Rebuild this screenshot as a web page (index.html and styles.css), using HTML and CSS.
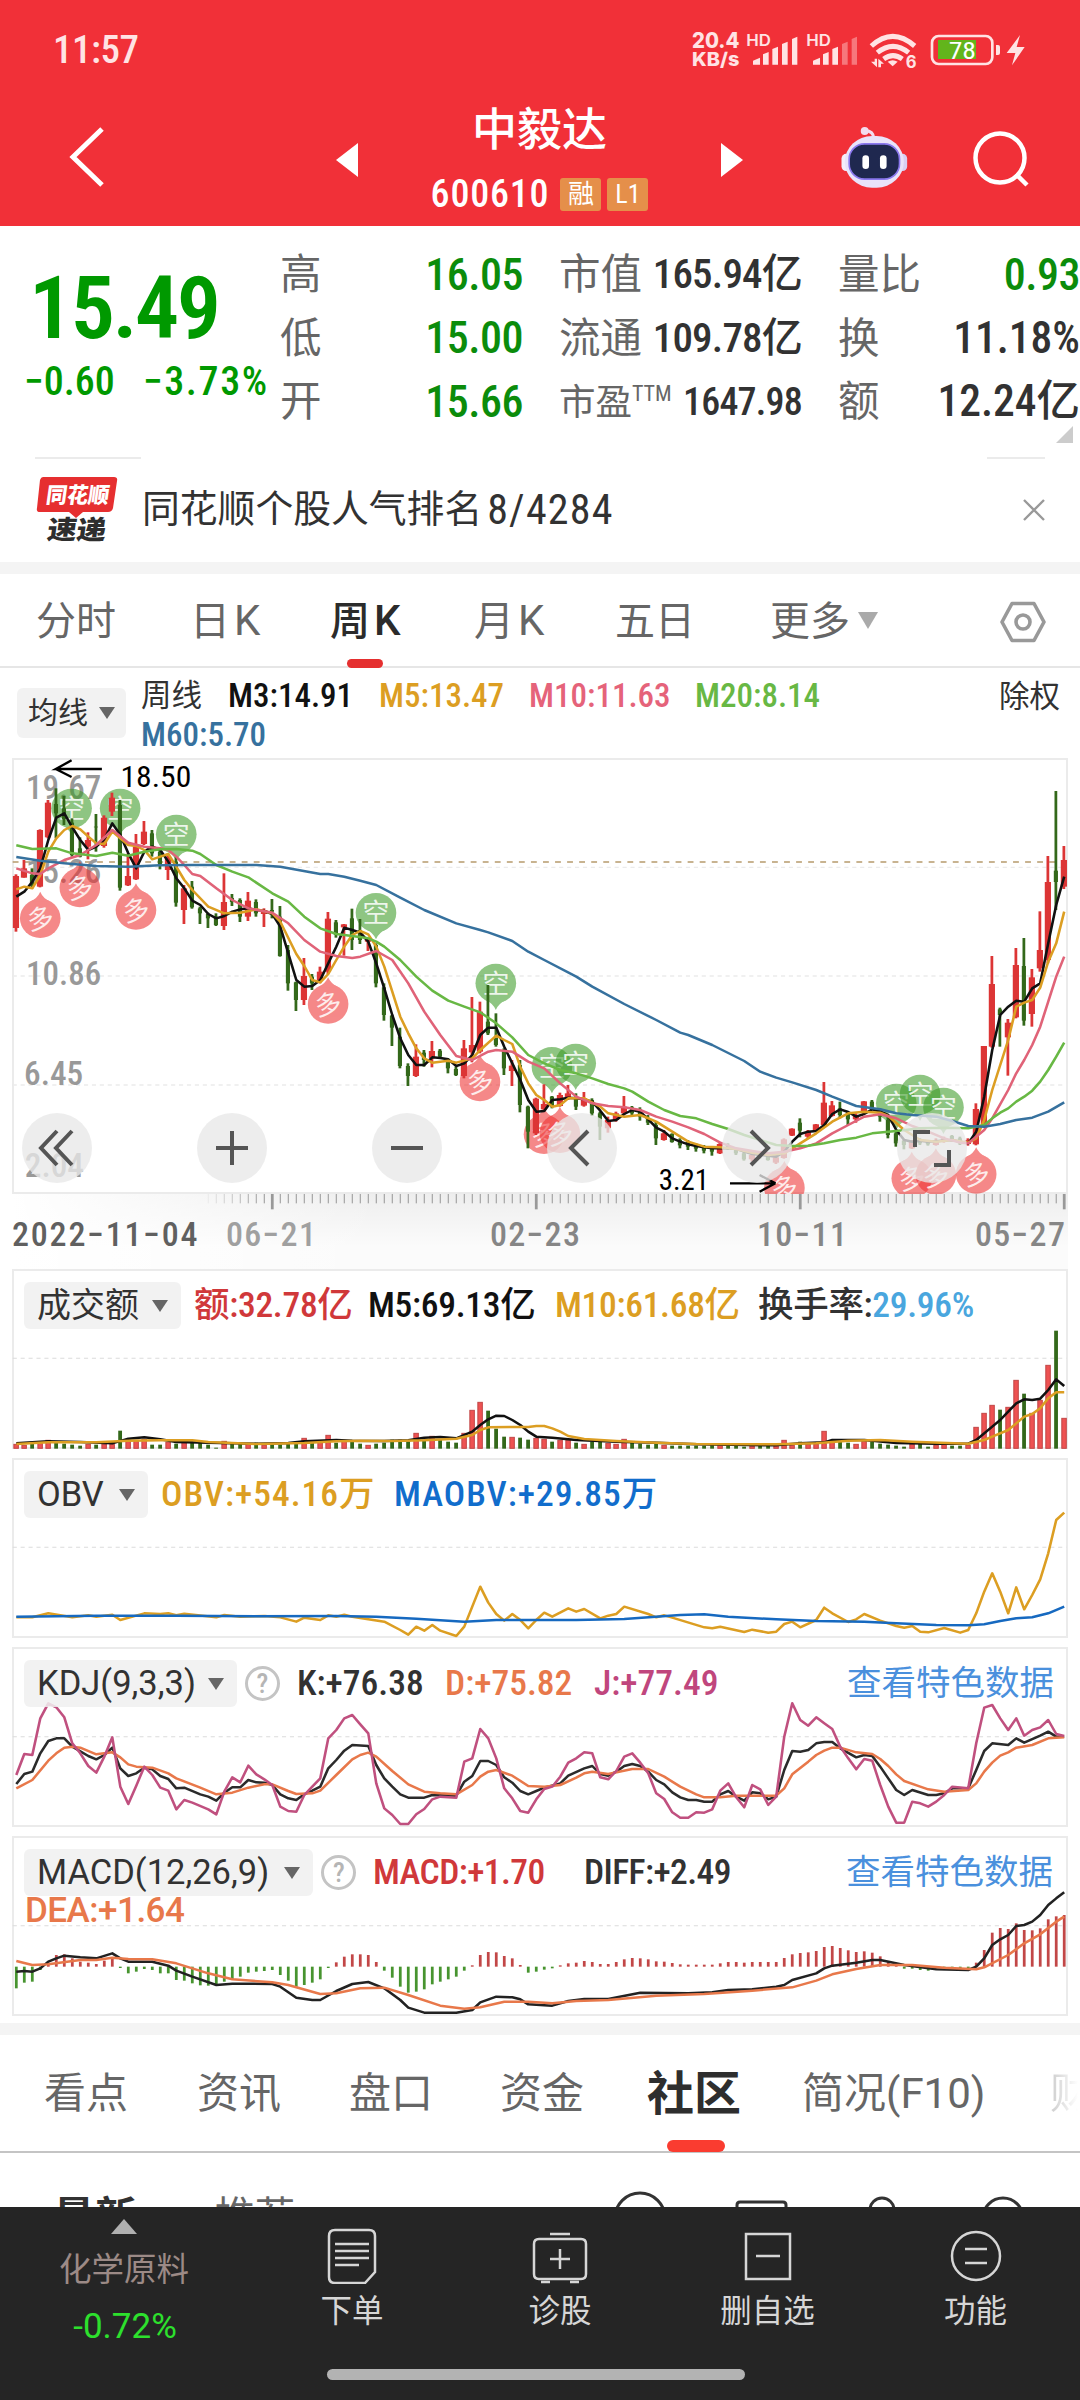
FILE: index.html
```
<!DOCTYPE html>
<html lang="zh-CN">
<head>
    <meta charset="UTF-8">
    <meta name="viewport" content="width=device-width, initial-scale=1.0">
    <title>中毅达 600610</title>
    <link rel="stylesheet" href="styles.css">
</head>
<body>
    <header class="header">
        <div class="status-bar">
            <span class="clock">11:57</span>
            <svg class="status-icons" viewBox="0 0 1080 180" width="360" height="60">
                <g fill="#ffe3e4" font-family="Inter, sans-serif">
                    <text x="36" y="83" font-size="64" font-weight="800" textLength="142" lengthAdjust="spacingAndGlyphs">20.4</text>
                    <text x="36" y="138" font-size="56" font-weight="800" textLength="142" lengthAdjust="spacingAndGlyphs">KB/s</text>
                    <text x="199" y="77" font-size="47" font-weight="600" textLength="74" lengthAdjust="spacingAndGlyphs">HD</text>
                    <text x="379" y="77" font-size="47" font-weight="600" textLength="74" lengthAdjust="spacingAndGlyphs">HD</text>
                    <path d="M219 134v-12l21-9v21zM249 134v-31l17-7v38zM277 134v-47l17-7v54zM306 134v-62l17-7v69zM336 134v-77l16-7v84z"/>
                    <path d="M399 134v-12l21-9v21zM429 134v-31l17-7v38zM457 134v-47l17-7v54z"/>
                    <path d="M486 134v-62l17-7v69zM515 134v-77l16-7v84z" opacity=".4"/>
                    <g fill="none" stroke="#ffe3e4" stroke-width="15">
                        <path d="M574 78q64-58 130 0"/>
                        <path d="M592 98q47-38 94 0"/>
                        <path d="M611 117q28-20 56 0"/>
                    </g>
                    <path d="M623 125q15-9 30 0l-15 14z"/>
                    <path d="M584 116h7v26l-18-17h11zM595 142v-26l17 15h-9v11z"/>
                    <text x="677" y="144" font-size="50" font-weight="700">6</text>
                    <rect x="756" y="48" width="181" height="84" rx="20" fill="none" stroke="#ffe3e4" stroke-width="8"/>
                    <path d="M948 75h6q6 0 6 6v18q0 6-6 6h-6z"/>
                    <rect x="774" y="60" width="114" height="57" fill="#62b51c"/>
                    <text x="806" y="116" font-size="70" font-family="Roboto, sans-serif" fill="#fff" textLength="82" lengthAdjust="spacingAndGlyphs">78</text>
                    <path d="M1020 45l-40 54h26l-10 37 38-55h-24z"/>
                </g>
            </svg>
        </div>
        <div class="title-bar">
            <svg class="back" viewBox="0 0 40 64" width="40" height="64"><path d="M35 4L6 32 35 60" fill="none" stroke="#fff" stroke-width="5"/></svg>
            <svg class="prev" viewBox="0 0 22 34" width="22" height="34"><path d="M22 0v34L0 17z" fill="#fff"/></svg>
            <div class="stock">
                <h1>中毅达</h1>
                <div class="code"><span class="code-num">600610</span><span class="tag">融</span><span class="tag">L1</span></div>
            </div>
            <svg class="next" viewBox="0 0 22 34" width="22" height="34"><path d="M0 0v34L22 17z" fill="#fff"/></svg>
            <svg class="robot" viewBox="0 0 204 190" width="68" height="63">
                <path d="M102 38q-2-24-26-24" fill="none" stroke="#f3dcef" stroke-width="9"/>
                <circle cx="74" cy="15" r="12" fill="#f3dcef"/>
                <rect x="4" y="84" width="30" height="52" rx="14" fill="#f4eefb"/>
                <rect x="172" y="84" width="30" height="52" rx="14" fill="#d9d0f3"/>
                <rect x="14" y="30" width="178" height="156" rx="82" fill="#e9e3fa"/>
                <rect x="27" y="54" width="152" height="106" rx="46" fill="#1f284f" stroke="#8b78ee" stroke-width="5"/>
                <rect x="67" y="88" width="20" height="42" rx="10" fill="#fff"/>
                <rect x="120" y="88" width="20" height="42" rx="10" fill="#fff"/>
            </svg>
            <svg class="search" viewBox="0 0 58 58" width="58" height="58"><g fill="none" stroke="#fff" stroke-width="4.5"><circle cx="27" cy="27" r="24.5"/><path d="M43 43l11 11"/></g></svg>
        </div>
    </header>

    <section class="quote">
        <div class="price">
            <strong>15.49</strong>
            <p><span>−0.60</span><span>−3.73%</span></p>
        </div>
        <dl class="stats">
            <dt>高</dt><dd class="down">16.05</dd>
            <dt>市值</dt><dd class="narrow">165.94亿</dd>
            <dt>量比</dt><dd class="down">0.93</dd>
            <dt>低</dt><dd class="down">15.00</dd>
            <dt>流通</dt><dd class="narrow">109.78亿</dd>
            <dt>换</dt><dd>11.18%</dd>
            <dt>开</dt><dd class="down">15.66</dd>
            <dt class="pe">市盈<sup>TTM</sup></dt><dd class="narrow pe">1647.98</dd>
            <dt>额</dt><dd>12.24亿</dd>
        </dl>
        <i class="corner"></i>
    </section>

    <section class="news">
        <svg class="news-logo" viewBox="0 0 82 68" width="82" height="68">
            <path d="M7 1h71q4 0 3 4l-4 27q-1 4-5 4H47l-7 6-7-6H4q-4 0-3-4L4 4q1-3 3-3z" fill="#e62f30"/>
            <g font-family="Noto Sans CJK SC, sans-serif" font-weight="900">
                <text transform="skewX(-8)" x="13" y="27" font-size="22" fill="#fff" textLength="63" lengthAdjust="spacingAndGlyphs">同花顺</text>
                <text transform="skewX(-8)" x="19" y="63" font-size="26" fill="#2e2e2e" textLength="59" lengthAdjust="spacingAndGlyphs">速递</text>
            </g>
        </svg>
        <p>同花顺个股人气排名<span>8/4284</span></p>
        <svg class="close" viewBox="0 0 22 22" width="22" height="22"><path d="M1 1l20 20M21 1L1 21" stroke="#999" stroke-width="2.4"/></svg>
    </section>

    <nav class="period-tabs">
        <span>分时</span><span>日<em>K</em></span><span class="active">周<em>K</em></span><span>月<em>K</em></span><span>五日</span><span class="more">更多<i class="caret"></i></span>
        <svg viewBox="0 0 46 42" width="46" height="42"><g fill="none" stroke="#999" stroke-width="3.6"><path d="M12 2.500h22L44 21 34 39.500H12L2 21z" stroke-linejoin="round"/><circle cx="23" cy="21" r="7"/></g></svg>
    </nav>

    <div class="ma-row">
        <button class="chip">均线<i class="caret"></i></button>
        <div class="ma-list">
            <span class="ma-name">周线</span><span class="c-black">M3:14.91</span><span class="c-gold">M5:13.47</span><span class="c-pink">M10:11.63</span><span class="c-green">M20:8.14</span><span class="c-steel">M60:5.70</span>
        </div>
        <span class="adjust">除权</span>
    </div>

    <div class="panel panel-main">
        <svg id="klineChart" viewBox="35 24 3066.6 1308" preserveAspectRatio="none"></svg>
        <div class="controls">
            <button><svg viewBox="0 0 40 40"><path d="M20 3L4 20l16 17M35 3L19 20l16 17"/></svg></button>
            <button><svg viewBox="0 0 40 40"><path d="M20 3v34M4 20h32"/></svg></button>
            <button><svg viewBox="0 0 40 40"><path d="M4 20h32"/></svg></button>
            <button><svg viewBox="0 0 40 40"><path d="M26 3L9 20l17 17"/></svg></button>
            <button><svg viewBox="0 0 40 40"><path d="M14 3l17 17-17 17"/></svg></button>
            <button><svg viewBox="0 0 40 40"><path d="M3 19V4h15M37 22v15H22"/></svg></button>
        </div>
    </div>
    <div class="time-axis">
        <svg id="timeTicks" viewBox="35 0 3066.6 48" preserveAspectRatio="none"></svg>
        <div class="dates"><b>2022−11−04</b><span class="faded">06−21</span><span>02−23</span><span>10−11</span><span>05−27</span></div>
    </div>

    <div class="panel">
        <svg id="volumeChart" viewBox="35 27 3066.6 540" preserveAspectRatio="none"></svg>
        <div class="legend legend-vol">
            <button class="chip">成交额<i class="caret"></i></button>
            <span class="c-red">额:32.78亿</span><span class="c-black">M5:69.13亿</span><span class="c-gold">M10:61.68亿</span><span>换手率:<em class="c-sky">29.96%</em></span>
        </div>
    </div>

    <div class="panel">
        <svg id="obvChart" viewBox="35 594 3066.6 540" preserveAspectRatio="none"></svg>
        <div class="legend legend-obv">
            <button class="chip">OBV<i class="caret"></i></button>
            <span class="c-gold">OBV:+54.16万</span><span class="c-blue">MAOBV:+29.85万</span>
        </div>
    </div>

    <div class="panel">
        <svg id="kdjChart" viewBox="35 21 3066.6 540" preserveAspectRatio="none"></svg>
        <div class="legend legend-kdj">
            <button class="chip">KDJ(9,3,3)<i class="caret"></i></button><i class="help">?</i>
            <span>K:+76.38</span><span class="c-orange">D:+75.82</span><span class="c-magenta">J:+77.49</span><a>查看特色数据</a>
        </div>
    </div>

    <div class="panel">
        <svg id="macdChart" viewBox="35 588 3066.6 540" preserveAspectRatio="none"></svg>
        <div class="legend legend-macd">
            <button class="chip">MACD(12,26,9)<i class="caret"></i></button><i class="help">?</i>
            <span class="c-red">MACD:+1.70</span><span>DIFF:+2.49</span><a>查看特色数据</a>
        </div>
        <span class="dea c-orange">DEA:+1.64</span>
    </div>

    <nav class="info-tabs">
        <span>看点</span><span>资讯</span><span>盘口</span><span>资金</span><span class="active">社区</span><span>简况(F10)</span><span class="cut">财</span>
    </nav>

    <section class="feed">
        <b>最新</b><span>推荐</span>
        <svg viewBox="0 0 440 20" width="440" height="20"><g fill="none" stroke="#333" stroke-width="3"><circle cx="30" cy="27" r="25"/><path d="M127 20v-6q0-3 3-3h43q3 0 3 3v6"/><circle cx="272" cy="19" r="12"/><circle cx="393" cy="27" r="20"/></g></svg>
    </section>

    <footer class="bottom-bar">
        <div class="sector"><i></i><span>化学原料</span><b>-0.72%</b></div>
        <div class="action"><svg viewBox="0 0 60 60" width="60" height="60"><path d="M13 6h34q6 0 6 6v36l-10 11H13q-6 0-6-6V12q0-6 6-6zM13 20h34M13 27h34M13 34h34M13 41h24"/></svg>下单</div>
        <div class="action"><svg viewBox="0 0 60 60" width="60" height="60"><path d="M20 10h20M9 15h42q5 0 5 5v30q0 5-5 5H9q-5 0-5-5V20q0-5 5-5zM30 25v20M20 35h20M11 58h9M40 58h9"/></svg>诊股</div>
        <div class="action"><svg viewBox="0 0 60 60" width="60" height="60"><path d="M8 10h44v45H8zM18 32h24"/></svg>删自选</div>
        <div class="action"><svg viewBox="0 0 60 60" width="60" height="60"><circle cx="30" cy="32" r="24"/><path d="M19 25h22M19 39h22"/></svg>功能</div>
        <i class="home-bar"></i>
    </footer>

    <script src="charts.js"></script>
</body>
</html>
```
FILE: styles.css
```
* {
    box-sizing: border-box;
}

body {
    margin: 0;
    width: 1080px;
    height: 2400px;
    overflow: hidden;
    background: #fff;
    color: #323232;
    font-family: Roboto, "Noto Sans CJK SC", sans-serif;
    font-stretch: 84%;
    line-height: 1;
}

h1, p, dl, dd {
    margin: 0;
}

i, em {
    font-style: normal;
}

button {
    border: 0;
    padding: 0;
    font: inherit;
    color: inherit;
}

svg {
    display: block;
}

/* header */
.header {
    height: 226px;
    background: #f13038;
    color: #fff;
}

.status-bar {
    height: 100px;
    padding: 20px 40px 0 53px;
    display: flex;
    justify-content: space-between;
}

.clock {
    margin-top: 11px;
    font-size: 39px;
    font-weight: 500;
    letter-spacing: -.5px;
    color: #ffe3e4;
}

.title-bar {
    height: 126px;
    display: grid;
    grid-template-columns: 67px 269px 22px 363px 22px 97px 68px 65px 60px;
    align-items: start;
}

.back {
    grid-column: 2;
    margin-top: 25px;
}

.prev, .next {
    margin-top: 43px;
}

.stock {
    text-align: center;
}

.stock h1 {
    margin-top: 8px;
    font-size: 45px;
    font-weight: 500;
    line-height: 46px;
}

.code {
    display: flex;
    justify-content: center;
    align-items: center;
    gap: 6px;
    height: 40px;
    margin: 20px 0 0 0;
}

.code-num {
    margin-right: 5px;
    font-size: 38px;
    font-weight: 500;
    letter-spacing: .8px;
}

.tag {
    width: 41px;
    height: 33px;
    border-radius: 3px;
    background: #e58f4a;
    font-size: 26px;
    line-height: 33px;
}

.robot {
    grid-column: 7;
    margin-top: 26px;
}

.search {
    grid-column: 9;
    margin: 31px 0 0 0;
}

/* price block */
.quote {
    position: relative;
    height: 231px;
    display: flex;
}

.price {
    width: 280px;
    flex: none;
    color: #009900;
}

.price strong {
    display: block;
    margin: 38px 0 0 29px;
    font-size: 88px;
    font-weight: 600;
    letter-spacing: -2.500px;
    line-height: 87px;
}

.price p {
    display: flex;
    margin: 8px 0 0 24px;
    font-size: 40px;
    font-weight: 500;
    line-height: 46px;
    white-space: nowrap;
}

.price p span:first-child {
    width: 119px;
}

.price p span:last-child {
    letter-spacing: 1.600px;
}

.stats {
    width: 800px;
    margin-top: 17px;
    display: grid;
    grid-template-columns: 90px 153px 36px 82px 161px 36px 90px 152px;
    grid-auto-rows: 63.500px;
    align-items: center;
    font-size: 41.500px;
    white-space: nowrap;
}

.stats dt {
    color: #666;
}

.stats dt:nth-of-type(3n + 2) {
    grid-column: 4;
}

.stats dt:nth-of-type(3n) {
    grid-column: 7;
}

.stats dd {
    text-align: right;
    font-size: 43.500px;
    font-weight: 500;
}

.stats .down {
    color: #0b8c0b;
    font-size: 44px;
    letter-spacing: -.5px;
}

.stats .narrow {
    font-size: 41px;
    letter-spacing: -.8px;
}

.stats .pe {
    font-size: 36.500px;
}

.stats .narrow.pe {
    font-size: 38px;
}

.stats sup {
    font-size: 22px;
    vertical-align: 14px;
}

.corner {
    position: absolute;
    right: 7px;
    bottom: 14px;
    border: solid transparent;
    border-width: 0 0 17px 17px;
    border-bottom-color: #ccc;
}

/* news strip */
.news {
    height: 117px;
    border-bottom: 12px solid #f4f4f4;
    display: flex;
    align-items: center;
    background: linear-gradient(#ebebeb, #ebebeb) 35px 0 / 106px 2px no-repeat,
                linear-gradient(#ebebeb, #ebebeb) 987px 0 / 58px 2px no-repeat;
}

.news-logo {
    margin: 0 24px 0 36px;
}

.news p {
    flex: 1;
    font-size: 37.800px;
}

.news p span {
    margin-left: 5px;
    font-size: 42px;
    letter-spacing: 1.200px;
    vertical-align: -2px;
}

.close {
    margin-right: 35px;
}

/* period tabs */
.period-tabs {
    height: 94px;
    border-bottom: 2px solid #e6e6e6;
    display: grid;
    grid-template-columns: 154px 140px 144px 141px 155px 230px 46px;
    padding-left: 36px;
    align-items: center;
    font-size: 40px;
    color: #666;
}

.period-tabs span {
    position: relative;
    line-height: 94px;
}

.period-tabs em {
    margin-left: 4px;
    font-size: 42px;
    font-stretch: 94%;
}

.period-tabs .active {
    color: #2b2b2b;
    font-weight: 500;
}

.period-tabs .active::after {
    content: "";
    position: absolute;
    left: 17px;
    bottom: 1px;
    width: 36px;
    height: 9px;
    border-radius: 5px;
    background: #e52f2f;
}

.caret {
    display: inline-block;
    border: 8px solid transparent;
    border-top: 12px solid #666;
    border-bottom: 0;
}

.more .caret {
    margin-left: 8px;
    border-width: 17px 10px 0;
    border-top-color: #aaa;
    vertical-align: 6px;
}

/* moving averages */
.ma-row {
    height: 90px;
    padding: 8px 20px 0 17px;
    display: flex;
    font-size: 33px;
}

.chip {
    display: flex;
    align-items: center;
    justify-content: space-between;
    height: 47px;
    padding: 0 13px;
    border-radius: 6px;
    background: rgba(240, 240, 240, .85);
    white-space: nowrap;
}

.ma-row .chip {
    width: 109px;
    height: 50px;
    margin: 12px 15px 0 0;
    padding: 0 11px;
    font-size: 30px;
}

.ma-list {
    width: 840px;
    display: grid;
    grid-template-columns: 87px 151px 150px 166px 1fr;
    align-content: start;
    line-height: 39px;
    font-weight: 500;
}

.ma-name, .adjust {
    font-size: 30.500px;
    font-weight: 400;
}

.adjust {
    margin-left: auto;
    line-height: 42px;
}

/* chart panels */
.panel {
    position: relative;
    width: 1056px;
    height: 180px;
    margin: 0 0 9px 12px;
    border: 2px solid #ebebeb;
}

.panel > svg {
    position: absolute;
    left: -2px;
    top: -2px;
    width: 1056px;
    height: 180px;
}

.panel-main,
.panel-main > svg {
    height: 436px;
    margin-bottom: 0;
}

.panel-main > svg {
    overflow: hidden;
}

.controls {
    position: absolute;
    left: 8px;
    top: 353px;
    display: flex;
    gap: 105px;
}

.controls button {
    width: 70px;
    height: 70px;
    border-radius: 50%;
    background: rgba(232, 232, 232, .78);
    display: flex;
    align-items: center;
    justify-content: center;
}

.controls svg {
    width: 40px;
    height: 40px;
    fill: none;
    stroke: #555;
    stroke-width: 4;
}

.time-axis {
    width: 1056px;
    height: 75px;
    margin-left: 12px;
    background: linear-gradient(90deg, #fff 0, rgba(255, 255, 255, 0) 35%), linear-gradient(#eee, #fbfbfb 70%);
}

.time-axis svg {
    width: 1056px;
    height: 16px;
}

.dates {
    display: grid;
    grid-template-columns: 214px 264px 267px 218px 1fr;
    font-size: 34px;
    font-weight: 500;
    line-height: 48px;
    letter-spacing: 1.300px;
    color: #868686;
    white-space: nowrap;
}

.dates b {
    font-weight: 500;
    letter-spacing: 1.800px;
    color: #606060;
}

.dates .faded {
    color: #a0a0a0;
}

.legend {
    position: relative;
    display: grid;
    align-items: center;
    padding: 10px 0 0 10px;
    font-size: 35.500px;
    font-weight: 500;
    line-height: 49px;
    white-space: nowrap;
}

.legend .chip,
.legend a {
    font-size: 34px;
    font-weight: 400;
    letter-spacing: 0;
}

.legend-vol {
    grid-template-columns: 157px 187px 187px 203px 1fr;
    letter-spacing: -.3px;
}

.legend-obv {
    grid-template-columns: 124px 246px 1fr;
    letter-spacing: 1px;
}

.legend-kdj {
    grid-template-columns: 213px 60px 148px 149px 253px 1fr;
}

.legend-macd {
    grid-template-columns: 289px 60px 211px 262px 1fr;
    letter-spacing: -.6px;
}

.legend > span:first-of-type {
    padding-left: 13px;
}

.legend-kdj > span:first-of-type,
.legend-macd > span:first-of-type {
    padding-left: 0;
}

.legend-obv .chip,
.legend-kdj .chip,
.legend-macd .chip {
    font-size: 34.500px;
    font-stretch: 97%;
}

.help {
    width: 35px;
    height: 35px;
    margin-left: 8px;
    border: 3px solid #c4c4c4;
    border-radius: 50%;
    color: #b5b5b5;
    font-size: 27px;
    line-height: 30px;
    text-align: center;
}

.legend a {
    font-size: 34.500px;
    color: #4a90dd;
}

.dea {
    position: relative;
    display: block;
    margin: -4px 0 0 11px;
    font-size: 35px;
    font-weight: 500;
    font-stretch: 94%;
    letter-spacing: -.5px;
}

.c-black { color: #111; }
.c-gold { color: #dc9e22; }
.c-pink { color: #e5637a; }
.c-green { color: #68b844; }
.c-steel { color: #36719e; }
.c-red { color: #d0383a; }
.c-sky { color: #49a6de; }
.c-blue { color: #116dcc; }
.c-orange { color: #e8784a; }
.c-magenta { color: #c0467d; }

/* info tabs */
.info-tabs {
    height: 130px;
    margin-top: -2px;
    border-top: 12px solid #f4f4f4;
    border-bottom: 2px solid #c4c4c4;
    padding-left: 44px;
    display: grid;
    grid-template-columns: 153px 152px 151px 147px 155px 248px 1fr;
    font-size: 42px;
    font-stretch: 96%;
    line-height: 117px;
    color: #666;
    white-space: nowrap;
}

.info-tabs .active {
    position: relative;
    font-size: 47px;
    font-weight: 700;
    color: #2e2e2e;
}

.info-tabs .active::after {
    content: "";
    position: absolute;
    left: 20px;
    bottom: 0;
    width: 58px;
    height: 12px;
    border-radius: 6px;
    background: #fa3c30;
}

.info-tabs .cut {
    background: linear-gradient(90deg, #ccc, #fff 28px);
    -webkit-background-clip: text;
    background-clip: text;
    color: transparent;
}

.feed {
    height: 54px;
    overflow: hidden;
    padding: 41px 0 0 53px;
    display: flex;
    font-size: 42px;
}

.feed span {
    margin: 3px 0 0 78px;
    font-size: 40px;
    color: #666;
}

.feed b {
    margin-top: 3px;
}

.feed svg {
    flex: none;
    margin: -3px 0 0 315px;
}

/* bottom bar */
.bottom-bar {
    position: relative;
    height: 193px;
    background: #252525;
    display: grid;
    grid-template-columns: 248px 208px 208px 207px 209px;
    text-align: center;
    font-size: 31.500px;
    color: #d6d6d6;
}

.sector {
    padding: 12px 0 0 0;
    width: 248px;
}

.sector i {
    display: block;
    width: 0;
    margin: 0 auto 17px;
    border: 13px solid transparent;
    border-top: 0;
    border-bottom: 15px solid #b0b0b0;
}

.sector span {
    display: block;
    font-size: 32.500px;
    line-height: 38px;
    color: #9c8a86;
}

.sector b {
    display: block;
    margin: 19px 0 0 2px;
    font: 35px Roboto, sans-serif;
    font-stretch: 100%;
    line-height: 38px;
    color: #2de02d;
}

.action svg {
    margin: 17px auto 12px;
    fill: none;
    stroke: #d6d6d6;
    stroke-width: 2.500;
}

.home-bar {
    position: absolute;
    left: 327px;
    bottom: 20px;
    width: 418px;
    height: 11px;
    border-radius: 6px;
    background: #b3b3b3;
}
```
FILE: charts.js
```
var RED = '#dc3535';
var GREEN = '#33681a';
var STEP = 23.23;

// x of the n-th weekly candle
function px(i) {
    return 47.5 + STEP * i;
}

// "index:y index:y ..." -> svg points
function line(data, color, width) {
    var points = data.trim().split(/\s+/).map(function (pair) {
        var p = pair.split(':');
        return px(+p[0]).toFixed(1) + ',' + p[1];
    }).join(' ');
    return '<polyline points="' + points + '" fill="none" stroke="' + color + '" stroke-width="' + (width || 7.5) + '" stroke-linejoin="round"/>';
}

function rect(x, y, w, h, color) {
    return '<rect x="' + x + '" y="' + y + '" width="' + w + '" height="' + h + '" fill="' + color + '"/>';
}

function dash(y, color, pattern, width) {
    return '<path d="M37 ' + y + 'H3097" stroke="' + color + '" stroke-width="' + (width || 4) + '" stroke-dasharray="' + pattern + '"/>';
}

function text(x, y, size, color, str, length, weight) {
    return '<text x="' + x + '" y="' + y + '" font-size="' + size + '" fill="' + color + '" font-weight="' + (weight || 400) + '" textLength="' + length + '" lengthAdjust="spacingAndGlyphs">' + str + '</text>';
}

// color high low bodyTop bodyBottom, one candle per entry
var candles = ('r 373 545 378 534,r 330 383 355 383,g 355 415 375 405,r 238 412 240 410,r 150 265 158 262,g 115 265 162 190,g 138 225 175 208,' +
    'g 205 320 218 315,g 262 322 295 320,r 247 328 270 290,g 192 305 230 232,r 196 293 203 288,r 128 198 143 185,g 150 422 165 413,' +
    'r 310 408 378 406,r 252 390 290 388,r 213 285 245 282,g 240 320 250 310,g 295 358 305 345,r 310 390 320 360,g 320 470 335 458,' +
    'r 405 522 415 480,g 393 476 410 472,g 470 522 475 490,g 488 534 492 505,g 490 528 500 525,r 370 540 456 528,g 432 468 444 456,' +
    'g 445 516 450 500,r 426 513 452 500,g 448 500 456 490,r 475 531 480 492,g 447 505 480 485,g 468 620 500 618,g 585 722 600 700,' +
    'g 695 783 697 750,r 624 765 678 750,g 672 720 680 700,r 650 700 665 690,r 486 672 506 665,g 510 563 517 555,r 522 617 523 532,' +
    'g 476 600 505 570,g 507 582 540 570,r 565 603 567 575,g 580 712 585 700,g 700 812 712 795,g 795 888 797 833,g 833 955 860 948,' +
    'g 940 1008 948 978,r 883 981 920 978,g 900 950 908 930,r 873 952 903 925,g 897 925 902 920,g 925 970 930 955,g 950 978 957 975,' +
    'r 870 985 895 978,r 741 937 885 907,r 755 910 785 905,g 705 855 815 850,g 790 890 860 885,g 895 975 900 955,r 930 1008 947 963,' +
    'g 930 1087 945 1065,g 1067 1195 1070 1145,r 1043 1155 1046 1150,r 1003 1080 1062 1078,g 1038 1075 1040 1070,r 1028 1070 1035 1068,' +
    'r 1005 1050 1030 1045,g 1030 1080 1040 1070,r 1026 1070 1045 1067,g 1045 1098 1050 1090,g 1085 1170 1090 1130,r 1100 1148 1110 1135,' +
    'r 1085 1115 1090 1110,r 1038 1095 1070 1090,g 1068 1095 1072 1090,g 1072 1112 1078 1100,g 1095 1125 1108 1118,g 1115 1185 1125 1165,' +
    'r 1140 1172 1150 1170,g 1150 1178 1152 1176,g 1165 1195 1170 1186,g 1170 1200 1175 1190,g 1180 1205 1183 1196,g 1185 1210 1188 1202,' +
    'g 1190 1217 1192 1205,r 1178 1212 1182 1210,g 1180 1200 1185 1195,g 1195 1215 1198 1210,g 1205 1232 1210 1228,r 1210 1235 1215 1228,' +
    'g 1205 1225 1210 1220,g 1210 1232 1215 1230,r 1215 1242 1222 1238,r 1165 1226 1168 1224,r 1135 1158 1136 1157,g 1105 1162 1118 1142,' +
    'r 1140 1165 1145 1160,r 1122 1145 1123 1144,r 996 1130 1058 1125,r 1053 1100 1066 1098,g 1055 1105 1075 1095,g 1085 1125 1090 1108,' +
    'r 1090 1118 1095 1108,r 1053 1090 1054 1088,g 1050 1080 1055 1075,g 1075 1115 1080 1100,g 1100 1165 1110 1155,g 1145 1190 1150 1180,' +
    'g 1170 1198 1172 1185,r 1170 1197 1175 1195,g 1165 1185 1170 1180,g 1170 1187 1175 1183,r 1165 1187 1170 1185,r 1160 1178 1165 1175,' +
    'g 1155 1175 1158 1170,g 1160 1185 1165 1180,r 1165 1187 1170 1182,r 1060 1186 1077 1183,r 888 1130 888 1130,r 618 893 702 890,' +
    'g 773 890 778 795,r 807 977 818 862,r 594 805 645 802,g 564 827 648 812,r 657 830 682 792,r 484 665 600 655,r 318 640 396 630,' +
    'g 123 480 362 396,r 288 417 330 410').split(',').map(function (c) {
    return c.split(' ');
});

function pin(x, y, type) {
    var up = type === '多';
    var s = up ? -1 : 1;
    var color = up ? '#ee2f2f' : '#3a9a25';
    var tip = 'M' + (x - 30) + ' ' + (y + s * 50) + 'Q' + (x - 8) + ' ' + (y + s * 60) + ' ' + x + ' ' + (y + s * 80) +
        'Q' + (x + 8) + ' ' + (y + s * 60) + ' ' + (x + 30) + ' ' + (y + s * 50) + 'z';
    return '<g><g fill="' + color + '" opacity=".57"><circle cx="' + x + '" cy="' + y + '" r="59"/><path d="' + tip + '"/></g>' +
        '<text x="' + x + '" y="' + (y + 29) + '" font-size="78" fill="#fff" fill-opacity=".85" text-anchor="middle"' +
        (up ? ' transform="rotate(-12 ' + x + ' ' + y + ')"' : '') + '>' + type + '</text></g>';
}

function drawKline() {
    var out = dash(352, '#ebebeb', '12 11') + dash(678, '#ebebeb', '12 11') + dash(1005, '#ebebeb', '12 11') + dash(336, '#b79b6c', '17 18', 5);
    out += text(76, 148, 100, '#999', '19.67', 218, 500) + text(76, 400, 100, '#999', '15.26', 218, 500) + text(76, 704, 100, '#999', '10.86', 218, 500);
    out += text(70, 1004, 100, '#999', '6.45', 172, 500) + text(72, 1282, 100, '#999', '2.04', 172, 500);
    [[208, 175], [349, 175], [512, 253], [1092, 488], [1440, 700], [1603, 950], [1672, 940], [2603, 1060], [2672, 1033], [2740, 1072]].forEach(function (p) {
        out += pin(p[0], p[1], '空');
    });
    [[117, 505], [232, 413], [395, 480], [953, 762], [1394, 995], [1580, 1153], [1626, 1150], [2278, 1313], [2648, 1285], [2718, 1275], [2835, 1272]].forEach(function (p) {
        out += pin(p[0], p[1], '多');
    });
    candles.forEach(function (c, i) {
        var color = c[0] === 'r' ? RED : GREEN;
        var half = c[0] === 'r' ? 9 : 6;
        out += rect(px(i) - 5, c[1], 8, c[2] - c[1], color);
        out += rect(px(i) - half - 1, c[3], half * 2, c[4] - c[3], color);
    });
    out += line('0:440 1:425 2:395 3:355 4:270 5:203 6:190 7:232 8:270 9:300 10:290 11:268 12:220 13:255 14:310 15:355 16:305 17:290 18:300 19:335 20:385 21:415 22:452 23:465 24:492 25:505 26:498 27:485 28:478 29:475 30:480 31:483 32:492 33:530 34:610 35:690 36:710 37:708 38:690 39:640 40:590 41:533 42:540 43:548 44:575 45:640 46:715 47:795 48:865 49:915 50:945 51:945 52:922 53:924 54:928 55:948 56:940 57:915 58:855 59:833 60:833 61:890 62:940 63:990 64:1050 65:1085 66:1083 67:1050 68:1048 69:1043 70:1045 71:1048 72:1055 73:1082 74:1113 75:1110 76:1092 77:1080 78:1085 79:1108 80:1133 81:1145 82:1165 83:1175 84:1183 85:1188 86:1192 87:1195 89:1195 90:1197 91:1205 92:1212 94:1217 95:1220 96:1205 97:1175 98:1152 99:1145 100:1143 101:1125 102:1092 103:1078 104:1086 105:1100 106:1092 107:1078 108:1085 109:1095 110:1140 111:1170 112:1175 113:1172 114:1175 117:1170 118:1175 119:1180 120:1145 121:1040 122:900 123:795 124:770 125:752 126:755 127:715 128:700 129:580 130:465 131:380', '#111');
    out += line('0:418 1:410 2:415 3:375 4:305 5:265 6:240 7:228 8:238 9:260 10:280 11:282 12:245 13:265 14:285 15:288 16:300 17:328 18:320 19:312 20:350 21:390 22:420 24:470 26:490 28:488 30:478 32:490 33:515 35:612 36:648 37:690 38:697 39:672 40:630 41:590 42:555 43:543 44:553 45:590 46:650 48:800 49:850 50:895 51:925 52:938 54:932 55:938 57:925 58:900 60:857 61:870 62:882 63:950 64:1000 65:1035 66:1050 67:1070 68:1065 69:1045 71:1045 73:1070 74:1090 76:1100 78:1095 80:1115 82:1145 84:1175 86:1190 88:1192 90:1197 92:1208 94:1215 96:1210 98:1180 100:1150 102:1115 104:1090 106:1085 108:1088 109:1098 111:1140 113:1170 115:1175 117:1170 119:1178 120:1165 121:1110 122:1020 124:870 125:770 126:758 127:750 128:713 129:635 130:580 131:485', '#dc9e22');
    out += line('0:355 2:370 3:372 4:355 6:330 8:315 10:285 12:240 14:278 16:290 18:295 19:300 20:320 21:345 22:372 23:378 25:415 27:450 29:475 32:488 34:520 36:570 38:605 40:618 42:624 43:620 45:603 47:630 49:700 51:785 53:855 55:918 57:930 59:905 60:900 62:905 64:935 66:955 68:1000 70:1040 72:1060 74:1068 76:1072 78:1080 80:1100 82:1115 84:1132 86:1152 88:1178 90:1195 92:1203 94:1210 96:1205 98:1195 100:1180 102:1150 104:1125 106:1100 108:1093 110:1105 112:1128 114:1145 116:1165 118:1178 119:1180 121:1140 122:1105 124:1020 125:970 126:930 127:885 128:830 129:755 130:680 131:620', '#e06378');
    out += line('0:286 2:297 5:295 7:310 10:318 12:308 14:317 16:305 18:298 20:297 22:302 23:312 25:345 27:365 29:382 32:430 34:455 36:500 38:535 40:552 42:558 44:565 45:575 46:590 48:630 50:680 52:722 54:752 56:770 58:787 60:820 62:862 64:915 66:940 68:960 70:970 72:985 74:1002 76:1015 77:1025 79:1055 81:1080 83:1098 85:1105 87:1122 89:1137 91:1155 93:1170 95:1185 97:1188 99:1187 101:1180 103:1170 105:1163 107:1150 110:1143 113:1135 116:1133 119:1135 121:1125 122:1105 123:1088 124:1075 125:1055 126:1040 127:1022 128:995 129:960 130:920 131:878', '#68b844');
    out += line('0:321 3:332 6:340 10:348 14:350 18:346 22:345 30:345 33:350 38:372 39:372 41:380 43:392 45:405 48:443 51:480 55:520 58:540 59:547 62:573 64:605 66:630 70:680 72:710 76:762 80:810 83:848 84:855 87:885 91:933 93:965 95:983 97:997 100:1020 102:1040 105:1068 108:1078 110:1090 112:1095 115:1100 117:1113 119:1128 121:1130 123:1122 125:1110 127:1103 129:1085 131:1057', '#36719e');
    out += '<path d="M296 57H162l46-26M162 57l46 24M2120 1300h132l-46-25M2252 1300l-46 25" fill="none" stroke="#000" stroke-width="7"/>';
    out += text(350, 112, 88, '#000', '18.50', 206) + text(1913, 1321, 88, '#000', '3.21', 146);
    document.getElementById('klineChart').innerHTML = out;
}

function drawTicks() {
    var out = '';
    for (var i = 24; i < 132; i++) {
        var major = (i - 32) % 33 === 0;
        out += '<g opacity="' + Math.min(1, (i - 23) / 8) + '">' + rect(px(i) - (major ? 4 : 1.5), 0, major ? 8 : 3, major ? 46 : 28, '#999') + '</g>';
    }
    document.getElementById('timeTicks').innerHTML = out;
}

function drawVolume() {
    var heights = [5, 4, 5, 7, 9, 6, 5, 4, 3, 5, 4, 5, 5, 18, 9, 9, 10, 4, 4, 7, 5, 7, 6, 6, 4, 1, 8, 6, 6, 5, 6, 4, 4, 4, 6, 5, 11, 8, 7, 14,
        6, 9, 8, 5, 4, 5, 6, 9, 9, 7, 16, 9, 13, 9, 7, 6, 16, 39, 47, 38, 20, 12, 12, 11, 9, 11, 10, 7, 9, 9, 6, 5, 7, 7, 6, 5, 10, 6, 5, 4,
        6, 4, 3, 3, 3, 3, 3, 4, 4, 3, 3, 2, 3, 3, 3, 4, 9, 4, 7, 5, 5, 18, 8, 7, 6, 5, 8, 7, 5, 4, 3, 2, 5, 5, 2, 4, 5, 3, 3, 4,
        22, 36, 44, 39, 42, 69, 55, 36, 49, 84, 118, 31];
    var out = dash(295, '#dcdcdc', '12 11', 3);
    heights.forEach(function (h, i) {
        if (candles[i][0] === 'r') {
            out += '<rect x="' + (px(i) - 7) + '" y="' + (568 - h * 3) + '" width="13" height="' + (h * 3 - 3) + '" fill="#ee5252" stroke="#c24747" stroke-width="3"/>';
        } else {
            out += rect(px(i) - 6, 566 - h * 3, 11, h * 3, GREEN);
        }
    });
    out += line('0:550 4:544 8:546 12:550 14:536 16:532 18:538 20:546 24:548 30:551 34:549 36:544 40:540 42:542 46:543 49:541 51:533 53:531 55:535 57:515 58:495 59:478 60:467 61:468 62:480 63:495 64:515 65:530 67:533 70:540 75:545 80:548 85:553 95:556 98:550 101:547 102:540 106:540 110:549 115:551 119:551 120:540 122:500 123:480 124:455 125:430 126:418 127:420 128:416 129:390 130:358 131:378', '#111');
    out += line('0:552 4:547 10:547 14:542 18:541 22:541 24:546 30:552 36:549 40:544 43:542 47:543 51:541 55:536 57:525 58:510 59:502 62:501 64:501 65:498 66:498 67:505 68:515 69:528 71:537 75:543 80:548 85:552 95:553 100:550 104:542 108:540 112:545 119:551 121:540 122:530 124:510 125:490 126:470 127:462 128:445 129:415 130:397 131:397', '#dc9e22');
    document.getElementById('volumeChart').innerHTML = out;
}

function drawObv() {
    var out = dash(862, '#dcdcdc', '12 11', 3);
    out += line('0:1072 2:1072 4:1060 7:1072 9:1066 10:1070 12:1064 13:1080 16:1060 18:1062 19:1060 20:1066 21:1061 25:1072 26:1065 28:1070 31:1068 33:1072 35:1085 36:1073 38:1080 39:1066 40:1070 41:1064 42:1070 44:1078 46:1085 48:1110 49:1124 50:1100 51:1112 52:1095 53:1112 55:1128 56:1100 57:1040 58:980 59:1028 60:1062 61:1082 62:1062 63:1080 64:1105 65:1080 66:1058 67:1070 69:1045 70:1055 71:1047 73:1075 74:1067 75:1062 76:1040 79:1062 80:1072 81:1066 82:1073 86:1102 87:1105 88:1100 91:1116 92:1109 94:1118 95:1115 96:1092 97:1085 98:1102 100:1080 101:1043 102:1060 104:1086 105:1078 106:1062 108:1082 110:1098 111:1103 112:1098 113:1115 114:1117 116:1104 118:1118 119:1110 120:1060 121:995 122:940 123:995 124:1060 125:982 126:1048 127:1005 128:958 129:880 130:780 131:758', '#dc9e22');
    out += line('0:1070 10:1067 20:1067 30:1069 40:1068 45:1070 50:1076 56:1085 60:1080 70:1080 76:1077 83:1065 86:1063 89:1070 95:1078 100:1083 106:1085 110:1090 115:1095 119:1096 121:1093 123:1083 125:1075 127:1072 129:1060 131:1040', '#1669c0');
    document.getElementById('obvChart').innerHTML = out;
}

function drawKdj() {
    var out = dash(290, '#dcdcdc', '12 11', 3);
    out += line('0:432 1:402 2:395 3:340 4:303 5:295 6:295 7:320 9:348 10:358 11:345 12:323 13:385 14:408 15:400 16:383 17:388 18:408 19:417 20:445 21:443 23:463 24:470 25:482 26:458 27:442 28:442 29:420 30:427 31:428 32:435 33:463 34:475 35:480 36:463 37:452 38:440 39:385 40:360 41:332 42:315 44:318 45:375 46:415 47:440 48:463 49:473 51:473 52:465 55:467 56:425 57:408 58:363 59:363 60:375 61:412 62:428 63:453 64:463 65:453 66:443 68:430 69:407 71:385 72:378 73:402 74:407 75:395 76:378 77:372 78:378 79:395 80:420 81:433 82:457 83:472 84:480 85:480 86:485 87:485 88:463 89:453 90:470 91:482 92:457 93:460 94:478 95:470 96:390 97:333 98:335 99:330 100:310 101:306 102:306 103:325 105:352 106:345 107:348 108:380 109:415 110:450 111:465 112:450 114:465 115:465 116:460 117:445 119:445 120:390 121:333 122:310 124:315 125:295 126:308 128:287 129:275 130:290 131:290', '#2b2b2b');
    out += line('0:445 2:420 4:362 5:340 6:323 7:320 8:323 10:343 12:337 13:352 14:373 15:380 17:383 19:400 20:415 23:443 25:463 27:458 29:443 31:433 32:433 34:453 35:462 37:460 38:452 40:405 42:358 43:345 44:338 45:350 47:393 49:433 51:455 53:460 55:463 57:435 58:410 59:395 60:390 62:407 64:438 66:440 68:435 70:413 71:400 72:395 74:402 77:387 79:387 81:410 83:440 85:463 86:472 88:472 90:467 92:467 95:467 96:445 97:403 99:365 100:345 101:332 102:323 103:323 105:337 107:342 108:357 109:378 110:403 111:423 113:440 114:448 116:455 119:450 120:430 121:395 122:368 123:347 124:337 125:323 127:315 129:295 131:292', '#e8784a');
    out += line('0:405 1:342 2:345 3:235 4:190 5:202 6:232 7:310 8:340 9:378 10:398 11:350 12:292 13:440 14:492 15:437 16:380 17:405 18:443 19:452 20:508 21:480 22:488 24:508 25:523 26:455 27:412 28:427 29:377 30:403 31:418 32:435 33:500 34:513 35:515 36:465 37:440 38:415 39:295 40:270 41:235 42:225 43:253 44:280 45:430 46:505 47:525 48:552 49:552 50:523 51:507 52:478 53:470 55:473 56:365 57:355 58:267 59:295 60:355 61:445 62:475 63:513 64:518 65:478 66:447 67:440 68:410 69:368 70:355 71:337 72:340 73:412 74:418 75:393 76:350 77:340 78:368 79:400 80:460 81:477 82:517 83:533 84:533 85:517 86:518 87:508 88:452 89:430 90:472 91:502 92:435 93:448 94:495 95:470 96:290 97:190 98:240 99:257 100:232 101:250 102:267 103:320 104:355 105:388 106:357 107:362 108:435 109:500 110:548 111:548 112:485 113:490 114:500 115:485 116:465 117:440 119:445 120:310 121:203 122:195 123:235 124:270 125:235 126:287 127:270 128:262 129:240 130:282 131:288', '#c0507f');
    document.getElementById('kdjChart').innerHTML = out;
}

function drawMacd() {
    // end of each histogram bar, the zero line is at 980
    var bars = [1045, 1028, 1025, 990, 968, 945, 943, 955, 965, 968, 972, 962, 957, 984, 1000, 995, 987, 990, 1000, 1000, 1020, 1022, 1030, 1036,
        1037, 1038, 1025, 1018, 1010, 998, 995, 993, 990, 1005, 1022, 1040, 1035, 1028, 1018, 984, 967, 950, 943, 943, 945, 966, 992, 1013,
        1040, 1058, 1055, 1048, 1033, 1025, 1018, 1010, 992, 976, 945, 936, 937, 948, 955, 975, 998, 995, 989, 985, 976, 970, 968, 963,
        966, 972, 972, 966, 958, 954, 955, 958, 964, 965, 969, 973, 974, 974, 974, 974, 970, 966, 966, 968, 966, 966, 966, 966,
        954, 943, 939, 937, 933, 921, 918, 924, 931, 936, 934, 938, 949, 966, 976, 986, 986, 990, 992, 985, 984, 984, 984, 984,
        968, 930, 878, 864, 867, 850, 870, 871, 865, 838, 829, 825];
    var out = dash(857, '#dcdcdc', '12 11', 3);
    bars.forEach(function (y, i) {
        out += rect(px(i) - 4, Math.min(y, 980), 8, Math.abs(y - 980), y < 980 ? '#c24747' : '#47942f');
    });
    out += line('0:995 1:993 2:995 3:985 4:965 5:955 6:947 8:952 10:955 12:940 13:955 14:965 17:965 19:977 20:992 22:1010 25:1035 27:1031 32:1032 33:1040 35:1073 37:1080 38:1080 40:1053 42:1032 44:1026 46:1045 48:1080 49:1103 51:1118 55:1118 57:1110 58:1087 60:1070 62:1072 63:1078 64:1093 67:1097 69:1083 71:1077 74:1077 78:1058 84:1060 87:1057 89:1050 92:1048 95:1040 96:1035 97:1020 100:1000 101:985 102:977 105:968 107:960 108:960 111:975 115:988 119:990 120:980 121:955 122:915 123:898 124:885 125:858 126:855 127:845 128:825 129:795 130:775 131:757', '#222');
    out += line('0:963 2:975 4:973 8:960 10:960 12:953 14:957 17:958 20:970 24:1000 27:1018 32:1027 34:1035 38:1062 40:1060 43:1045 46:1043 49:1065 53:1097 56:1106 58:1102 61:1085 64:1085 67:1090 70:1083 74:1080 80:1067 86:1062 92:1052 97:1042 100:1022 102:1003 105:987 108:975 112:975 116:983 120:988 121:982 124:945 126:910 128:883 130:845 131:830', '#e8784a');
    document.getElementById('macdChart').innerHTML = out;
}

drawKline();
drawTicks();
drawVolume();
drawObv();
drawKdj();
drawMacd();
```
